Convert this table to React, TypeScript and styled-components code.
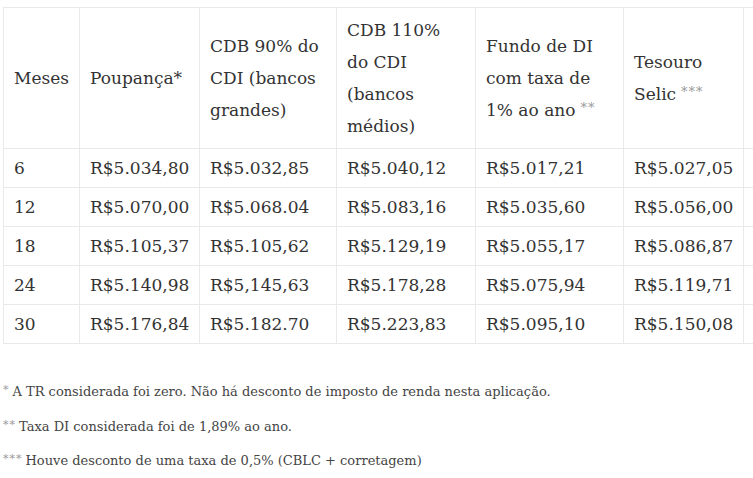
import React from 'react';
import styled, { createGlobalStyle } from 'styled-components';

const GlobalStyle = createGlobalStyle`
  html, body {
    margin: 0;
    padding: 0;
    background: #fff;
  }
  body {
    font-family: 'DejaVu Serif', 'Liberation Serif', serif;
    color: #333;
  }
`;

const Page = styled.div`
  width: 753px;
  height: 478px;
  overflow: hidden;
  padding: 7px 0 0 3px;
  box-sizing: border-box;
`;

const Table = styled.table`
  border-collapse: collapse;
  table-layout: fixed;
  width: 860px;
  font-size: 17px;
  line-height: 32px;
`;

const Cell = styled.td`
  border: 1px solid #e9e9e9;
  padding: 3px 10px;
  vertical-align: middle;
  white-space: nowrap;
`;

const HeadCell = styled.th`
  border: 1px solid #e9e9e9;
  padding: 6px 10px;
  font-weight: normal;
  text-align: left;
  vertical-align: middle;
`;

const LastLine = styled.span`
  white-space: nowrap;
`;

const Star = styled.span<{ $gap?: boolean }>`
  display: inline-block;
  font-size: 13px;
  line-height: 1;
  letter-spacing: 1px;
  color: #999;
  vertical-align: 4px;
  margin-left: ${(p) => (p.$gap ? '5px' : '0')};
`;

const Notes = styled.div`
  margin-top: 36px;
  font-size: 13px;
  line-height: 24px;
  color: #444;
`;

const Note = styled.p`
  margin: 0 0 10.5px;
`;

const NoteStar = styled.span`
  display: inline-block;
  font-size: 11px;
  line-height: 1;
  letter-spacing: 1px;
  color: #999;
  vertical-align: 3px;
  margin-right: 3px;
`;

const widths = [76, 120, 137, 139, 148, 120, 120];

const rows = [
  ['6', 'R$5.034,80', 'R$5.032,85', 'R$5.040,12', 'R$5.017,21', 'R$5.027,05'],
  ['12', 'R$5.070,00', 'R$5.068.04', 'R$5.083,16', 'R$5.035,60', 'R$5.056,00'],
  ['18', 'R$5.105,37', 'R$5.105,62', 'R$5.129,19', 'R$5.055,17', 'R$5.086,87'],
  ['24', 'R$5.140,98', 'R$5,145,63', 'R$5.178,28', 'R$5.075,94', 'R$5.119,71'],
  ['30', 'R$5.176,84', 'R$5.182.70', 'R$5.223,83', 'R$5.095,10', 'R$5.150,08'],
];

export default function App() {
  return (
    <Page>
      <GlobalStyle />
      <Table>
        <colgroup>
          {widths.map((w, i) => (
            <col key={i} style={{ width: w }} />
          ))}
        </colgroup>
        <thead>
          <tr>
            <HeadCell>Meses</HeadCell>
            <HeadCell>Poupança*</HeadCell>
            <HeadCell>CDB 90% do CDI (bancos grandes)</HeadCell>
            <HeadCell>CDB 110% do CDI (bancos médios)</HeadCell>
            <HeadCell>
              Fundo de DI com taxa de{' '}
              <LastLine>
                1% ao ano<Star $gap>**</Star>
              </LastLine>
            </HeadCell>
            <HeadCell>
              Tesouro{' '}
              <LastLine>
                Selic<Star $gap>***</Star>
              </LastLine>
            </HeadCell>
            <HeadCell />
          </tr>
        </thead>
        <tbody>
          {rows.map((r) => (
            <tr key={r[0]}>
              {r.map((v, i) => (
                <Cell key={i}>{v}</Cell>
              ))}
              <Cell />
            </tr>
          ))}
        </tbody>
      </Table>
      <Notes>
        <Note>
          <NoteStar>*</NoteStar>A TR considerada foi zero. Não há desconto de imposto de renda nesta aplicação.
        </Note>
        <Note>
          <NoteStar>**</NoteStar>Taxa DI considerada foi de 1,89% ao ano.
        </Note>
        <Note>
          <NoteStar>***</NoteStar>Houve desconto de uma taxa de 0,5% (CBLC + corretagem)
        </Note>
      </Notes>
    </Page>
  );
}
